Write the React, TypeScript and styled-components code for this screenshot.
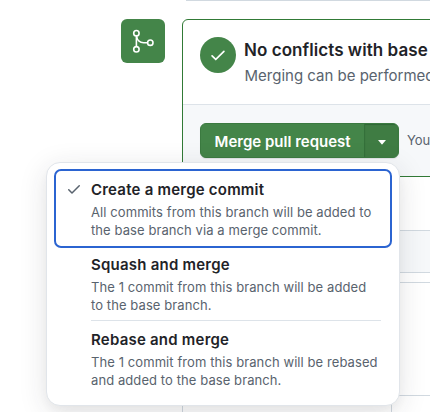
import React from "react";
import styled, { createGlobalStyle } from "styled-components";

const Global = createGlobalStyle`
  * { box-sizing: border-box; }
  body { margin: 0; background: #fff; overflow: hidden; font-family: Inter, "Liberation Sans", sans-serif; color: #1f2328; }
`;

const Page = styled.main`
  position: relative;
  width: 430px;
  height: 412px;
  overflow: hidden;
`;

const PreviousBox = styled.div`
  height: 1px;
  margin-left: 186px;
  background: #d1d9e0;
`;

const MergeRow = styled.section`
  display: flex;
  align-items: flex-start;
  gap: 17px;
  margin-top: 18px;
  padding-left: 121px;
`;

const BranchBadge = styled.div`
  flex: none;
  width: 44px;
  height: 44px;
  border-radius: 6px;
  background: #448549;
`;

const MergePanel = styled.div`
  flex: none;
  width: 300px;
  height: 158px;
  border: 1px solid #317a36;
  border-radius: 6px;
  overflow: hidden;
`;

const PanelStatus = styled.div`
  display: flex;
  gap: 9px;
  height: 84px;
  padding: 17px 0 0 17px;
`;

const StatusCircle = styled.div`
  display: grid;
  place-items: center;
  flex: none;
  width: 36px;
  height: 36px;
  border-radius: 50%;
  background: #448549;
`;

const StatusTitle = styled.h3`
  margin: 0 0 0 -1px;
  font-size: 17px;
  line-height: 26px;
  font-weight: 600;
  letter-spacing: 0.06px;
  white-space: nowrap;
`;

const StatusText = styled.p`
  margin: 0 0 0 -0.5px;
  font-size: 15px;
  line-height: 25px;
  color: #59636e;
  white-space: nowrap;
`;

const PanelFooter = styled.div`
  display: flex;
  height: 73px;
  padding: 18px 0 0 17px;
  border-top: 1px solid #dde3e9;
  background: #f6f8fa;
`;

const ButtonGroup = styled.div`
  display: flex;
  width: 199px;
  height: 35px;
  border: 1px solid #3b7a40;
  border-radius: 6px;
  background: #448549;
  box-shadow: 0 1px 1px rgba(31, 35, 40, 0.1);
  overflow: hidden;
`;

const MergeButton = styled.button`
  width: 164px;
  padding: 2px 0 0;
  border: 0;
  background: transparent;
  color: #fff;
  font: 600 15px/31px Inter, sans-serif;
  white-space: nowrap;
`;

const CaretButton = styled.button`
  display: grid;
  place-items: center;
  width: 34px;
  padding: 3px 0 0;
  border: 0;
  border-left: 1px solid #34703a;
  background: #3f7c43;
  box-shadow: inset 0 1px 1px rgba(0, 45, 17, 0.25);
`;

const Hint = styled.span`
  margin-left: 8px;
  font-size: 13px;
  line-height: 34px;
  color: #59636e;
`;

const Discussion = styled.section`
  width: 300px;
  margin: 53px 0 0 182px;
`;

const CommentTabs = styled.div`
  height: 43px;
  border: 1px solid #d1d9e0;
  background: #f6f8fa;
`;

const Editor = styled.div`
  height: 114px;
  margin-top: 9px;
  border: 1px solid #d1d9e0;
`;

const EditorFoot = styled.div`
  width: 210px;
  height: 30px;
  border: 1px solid #d1d9e0;
  border-width: 0 1px;
`;

const Menu = styled.div`
  position: absolute;
  left: 46px;
  top: 162px;
  width: 354px;
  height: 244px;
  padding: 6px 7px 0 7px;
  border: 1px solid #e1e5ea;
  border-radius: 14px;
  background: #fff;
  box-shadow: 0 6px 12px -3px rgba(37, 41, 46, 0.05), 0 6px 28px rgba(37, 41, 46, 0.13);
`;

const Option = styled.div<{ $selected?: boolean }>`
  display: grid;
  grid-template-columns: 37px 1fr;
  height: ${(p) => (p.$selected ? 79 : 75)}px;
  border-radius: 7px;
  box-shadow: ${(p) => (p.$selected ? "inset 0 0 0 2px #2b64d1" : "none")};
`;

const OptionIcon = styled.span`
  padding: 12px 0 0 12px;
`;

const OptionBody = styled.div<{ $gap: number; $divided?: boolean }>`
  height: ${(p) => (p.$divided ? 73 : 75)}px;
  margin-right: 11px;
  padding-top: ${(p) => p.$gap}px;
  border-bottom: ${(p) => (p.$divided ? "1px solid #dde3e9" : "0")};
`;

const OptionTitle = styled.div`
  font-size: 15px;
  line-height: 22px;
  font-weight: 600;
  letter-spacing: 0.22px;
  white-space: nowrap;
`;

const OptionText = styled.div`
  margin-top: 2px;
  font-size: 13px;
  line-height: 18px;
  letter-spacing: 0.085px;
  color: #59636e;
  white-space: nowrap;
`;

const Check = ({ size, color }: { size: number; color: string }) => (
  <svg width={size} height={size} viewBox="0 0 16 16" fill={color} display="block">
    <path d="M13.78 4.22a.75.75 0 0 1 0 1.06l-7.25 7.25a.75.75 0 0 1-1.06 0L2.22 9.28a.75.75 0 1 1 1.06-1.06L6 10.94l6.72-6.72a.75.75 0 0 1 1.06 0Z" />
  </svg>
);

const GitMerge = () => (
  <svg width="44" height="44" viewBox="0 0 44 44" fill="none" stroke="#fff" strokeWidth="1.6" display="block">
    <circle cx="15.4" cy="14.2" r="2.7" />
    <circle cx="15.4" cy="30.3" r="2.7" />
    <circle cx="29.3" cy="23.7" r="2.7" />
    <path d="M15.4 17v10.5M15.6 17.2c.4 3.9 3.2 6.5 7 6.5h4" />
  </svg>
);

const OPTIONS = [
  { title: "Create a merge commit", lines: ["All commits from this branch will be added to", "the base branch via a merge commit."], selected: true, gap: 10 },
  { title: "Squash and merge", lines: ["The 1 commit from this branch will be added", "to the base branch."], divided: true, gap: 6 },
  { title: "Rebase and merge", lines: ["The 1 commit from this branch will be rebased", "and added to the base branch."], gap: 6 },
];

export default function App() {
  return (
    <Page>
      <Global />
      <PreviousBox />
      <MergeRow>
        <BranchBadge><GitMerge /></BranchBadge>
        <MergePanel>
          <PanelStatus>
            <StatusCircle><Check size={18} color="#fff" /></StatusCircle>
            <div>
              <StatusTitle>No conflicts with base</StatusTitle>
              <StatusText>Merging can be performed</StatusText>
            </div>
          </PanelStatus>
          <PanelFooter>
            <ButtonGroup>
              <MergeButton>Merge pull request</MergeButton>
              <CaretButton aria-label="Select merge method">
                <svg width="8" height="5" viewBox="0 0 8 5"><path d="M0 0h8L4.4 4.2a.6.6 0 0 1-.8 0Z" fill="#fff" /></svg>
              </CaretButton>
            </ButtonGroup>
            <Hint>You</Hint>
          </PanelFooter>
        </MergePanel>
      </MergeRow>
      <Discussion>
        <CommentTabs />
        <Editor />
        <EditorFoot />
      </Discussion>
      <Menu role="menu">
        {OPTIONS.map((o) => (
          <Option key={o.title} $selected={o.selected} role="menuitemradio">
            <OptionIcon>{o.selected && <Check size={16} color="#59636e" />}</OptionIcon>
            <OptionBody $gap={o.gap} $divided={o.divided}>
              <OptionTitle>{o.title}</OptionTitle>
              <OptionText>{o.lines[0]}<br />{o.lines[1]}</OptionText>
            </OptionBody>
          </Option>
        ))}
      </Menu>
    </Page>
  );
}
